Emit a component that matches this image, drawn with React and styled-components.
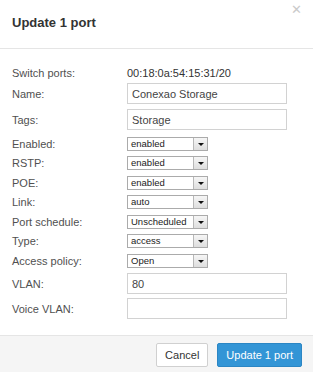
import React from "react";
import styled, { createGlobalStyle } from "styled-components";

const Global = createGlobalStyle`
  html, body { margin: 0; padding: 0; background: #fff; }
  body { font-family: "Liberation Sans", Arial, sans-serif; color: #333; }
  * { box-sizing: border-box; }
`;

const Modal = styled.div`
  width: 313px;
  height: 372px;
  background: #fff;
  display: flex;
  flex-direction: column;
  overflow: hidden;
`;

const Header = styled.div`
  height: 49px;
  border-bottom: 1px solid #e5e5e5;
  display: flex;
  justify-content: space-between;
  align-items: flex-start;
  padding: 0 11px 0 12px;
`;

const Title = styled.h3`
  margin: 15px 0 0;
  font-size: 13px;
  font-weight: bold;
  line-height: 16px;
  color: #333;
`;

const Close = styled.button`
  border: 0;
  background: none;
  padding: 0;
  margin-top: 3px;
  font-family: "Liberation Sans", Arial, sans-serif;
  font-size: 13px;
  line-height: 13px;
  color: #cacaca;
  cursor: pointer;
`;

const Body = styled.div`
  padding: 16px 12px 16px 12px;
  display: flex;
  flex-direction: column;
  flex: none;
`;

const Row = styled.div`
  display: grid;
  grid-template-columns: 115px 160px;
  align-items: center;
  height: ${(p) => p.$h}px;
  margin-bottom: ${(p) => p.$mb || 0}px;
`;

const Label = styled.span`
  font-size: 11px;
  color: #505050;
  white-space: nowrap;
`;

const Value = styled.span`
  font-size: 11px;
  color: #333;
`;

const TextInput = styled.input`
  width: 160px;
  height: 21px;
  border: 1px solid #d2d2d2;
  padding: 0 4px;
  font-family: "Liberation Sans", Arial, sans-serif;
  font-size: 11px;
  color: #444;
  background: #fff;
  outline: none;
`;

const SelectBox = styled.div`
  width: 81px;
  height: 14px;
  border: 1px solid #ababab;
  display: flex;
  align-items: stretch;
  background: #fff;
`;

const SelectText = styled.span`
  flex: 1;
  font-size: 9.5px;
  line-height: 12px;
  padding-left: 3px;
  color: #222;
  white-space: nowrap;
  overflow: hidden;
`;

const Arrow = styled.span`
  width: 14px;
  margin: 0 0 0 1px;
  border-left: 1px solid #b8b8b8;
  background: linear-gradient(#f6f6f6, #dedede);
  display: flex;
  align-items: center;
  justify-content: center;
  &::after {
    content: "";
    border-left: 3px solid transparent;
    border-right: 3px solid transparent;
    border-top: 3px solid #111;
    margin-top: 1px;
  }
`;

const Footer = styled.div`
  flex: 1;
  border-top: 1px solid #e5e5e5;
  background: #f5f5f5;
  display: flex;
  justify-content: flex-end;
  align-items: flex-start;
  gap: 9px;
  padding: 7px 11px 0 0;
`;

const Button = styled.button`
  height: 24px;
  padding: 0 8px;
  font-family: "Liberation Sans", Arial, sans-serif;
  font-size: 11px;
  border-radius: 2px;
  border: 1px solid ${(p) => (p.$primary ? "#2b86c4" : "#d0d0d0")};
  background: ${(p) => (p.$primary ? "#3395d6" : "#fff")};
  color: ${(p) => (p.$primary ? "#fff" : "#333")};
  cursor: pointer;
`;

const Select = ({ value }) => (
  <SelectBox>
    <SelectText>{value}</SelectText>
    <Arrow />
  </SelectBox>
);

const selects = [
  ["Enabled:", "enabled"],
  ["RSTP:", "enabled"],
  ["POE:", "enabled"],
  ["Link:", "auto"],
  ["Port schedule:", "Unscheduled"],
  ["Type:", "access"],
  ["Access policy:", "Open"],
];

export default function App() {
  return (
    <>
      <Global />
      <Modal>
        <Header>
          <Title>Update 1 port</Title>
          <Close aria-label="Close">✕</Close>
        </Header>
        <Body>
          <Row $h={16} $mb={2}>
            <Label>Switch ports:</Label>
            <Value>00:18:0a:54:15:31/20</Value>
          </Row>
          <Row $h={21} $mb={5}>
            <Label>Name:</Label>
            <TextInput defaultValue="Conexao Storage" />
          </Row>
          <Row $h={21} $mb={6.5}>
            <Label>Tags:</Label>
            <TextInput defaultValue="Storage" />
          </Row>
          {selects.map(([l, v]) => (
            <Row key={l} $h={14} $mb={5.5}>
              <Label>{l}</Label>
              <Select value={v} />
            </Row>
          ))}
          <Row $h={21} $mb={4}>
            <Label>VLAN:</Label>
            <TextInput defaultValue="80" />
          </Row>
          <Row $h={21}>
            <Label>Voice VLAN:</Label>
            <TextInput defaultValue="" />
          </Row>
        </Body>
        <Footer>
          <Button>Cancel</Button>
          <Button $primary>Update 1 port</Button>
        </Footer>
      </Modal>
    </>
  );
}
